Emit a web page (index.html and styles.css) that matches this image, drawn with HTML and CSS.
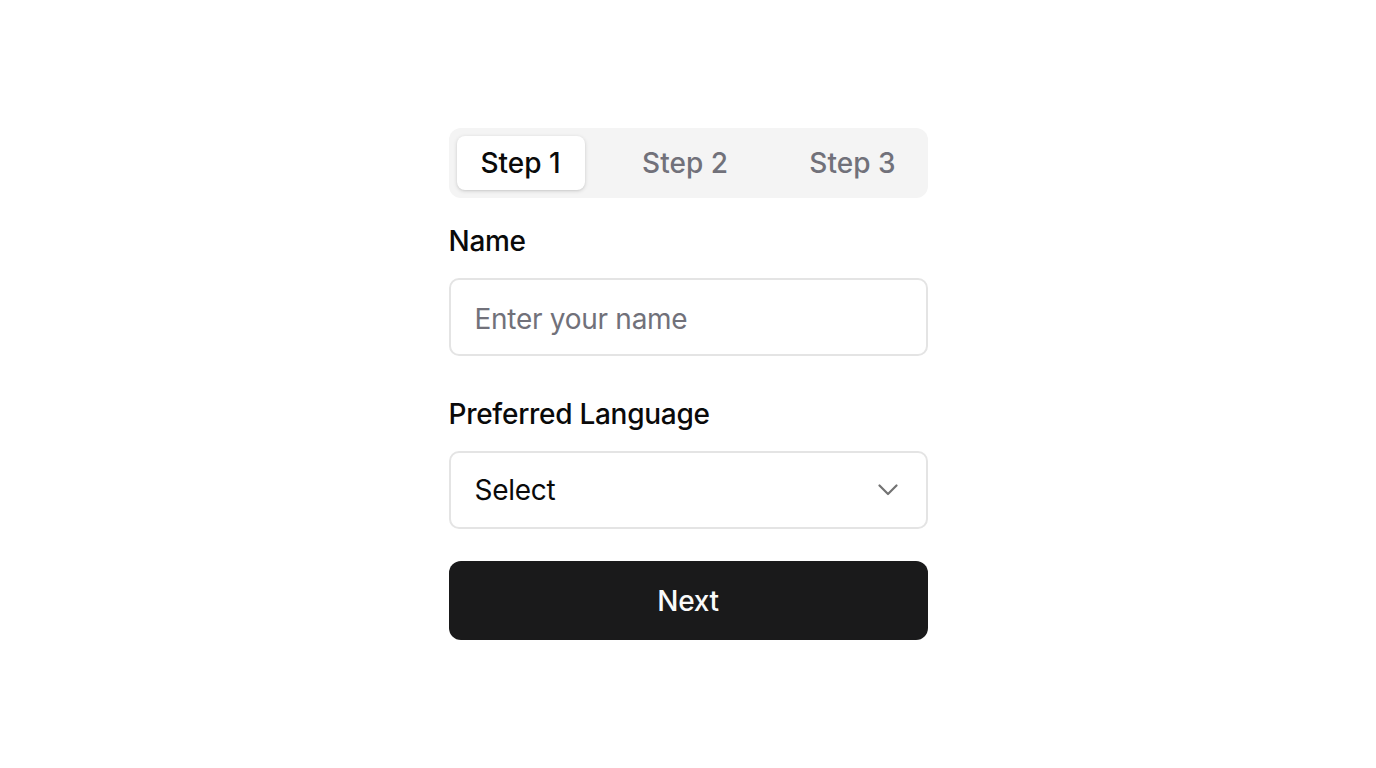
FILE: index.html
```html
<!DOCTYPE html>
<html>
  <head>
    <meta charset="utf-8">
    <title>Step form</title>
    <link rel="stylesheet" href="styles.css">
  </head>
  <body>
    <form class="wizard">
      <div class="tabs">
        <button type="button" class="tab active">Step 1</button>
        <button type="button" class="tab">Step 2</button>
        <button type="button" class="tab">Step 3</button>
      </div>

      <div class="field">
        <label for="name">Name</label>
        <input type="text" id="name" placeholder="Enter your name">
      </div>

      <div class="field">
        <label for="lang">Preferred Language</label>
        <div class="select" id="lang">
          <span>Select</span>
          <svg width="20" height="12" viewBox="0 0 20 12" fill="none" stroke="#737373" stroke-width="2.2" stroke-linecap="round" stroke-linejoin="round">
            <path d="M1.5 1.5l8.5 8.5 8.5-8.5"/>
          </svg>
        </div>
      </div>

      <button type="button" class="next">Next</button>
    </form>
  </body>
</html>
```

FILE: styles.css
```css
body {
  margin: 0;
  font-family: Inter, "Liberation Sans", sans-serif;
  color: #0a0a0a;
  background: #fff;
}

.wizard {
  width: 479px;
  margin: 128px auto 0;
  display: flex;
  flex-direction: column;
  letter-spacing: -0.28px;
}

.tabs {
  display: flex;
  justify-content: space-between;
  padding: 8px;
  background: #f4f4f4;
  border-radius: 12px;
  margin-bottom: 17px;
}

.tab {
  height: 54px;
  padding: 0 24px;
  border: 0;
  border-radius: 8px;
  background: transparent;
  font-family: inherit;
  font-size: 28px;
  font-weight: 500;
  letter-spacing: normal;
  color: #71717a;
}

.tab.active {
  background: #fff;
  color: #0a0a0a;
  box-shadow: 0 1px 4px rgba(0,0,0,0.14), 0 1px 2px rgba(0,0,0,0.06);
}

.field {
  display: flex;
  flex-direction: column;
  margin-bottom: 32px;
}

label {
  font-size: 28px;
  font-weight: 500;
  line-height: 40px;
  margin: 6px 0 17px;
}

input,
.select {
  box-sizing: border-box;
  height: 78px;
  padding: 0 24px;
  border: 2px solid #e4e4e4;
  border-radius: 10px;
  font-family: inherit;
  font-size: 28px;
  letter-spacing: inherit;
  color: #0a0a0a;
}

input {
  padding-top: 3px;
}

input::placeholder {
  color: #71717a;
}

.select {
  display: flex;
  align-items: center;
  justify-content: space-between;
  padding-right: 28px;
}

.next {
  height: 79px;
  border: 0;
  border-radius: 12px;
  background: #1a1a1b;
  color: #fafafa;
  font-family: inherit;
  font-size: 28px;
  font-weight: 500;
  letter-spacing: inherit;
}
```
